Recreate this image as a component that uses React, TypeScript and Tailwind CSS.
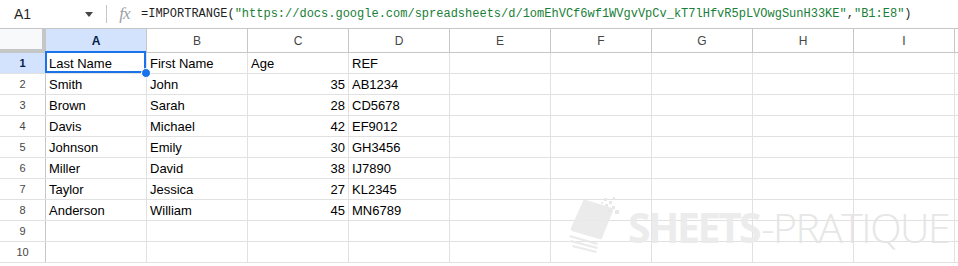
import React from "react";

const cols = ["A", "B", "C", "D", "E", "F", "G", "H", "I"];

type Row = [string, string, string, string];
const data: Row[] = [
  ["Last Name", "First Name", "Age", "REF"],
  ["Smith", "John", "35", "AB1234"],
  ["Brown", "Sarah", "28", "CD5678"],
  ["Davis", "Michael", "42", "EF9012"],
  ["Johnson", "Emily", "30", "GH3456"],
  ["Miller", "David", "38", "IJ7890"],
  ["Taylor", "Jessica", "27", "KL2345"],
  ["Anderson", "William", "45", "MN6789"],
  ["", "", "", ""],
  ["", "", "", ""],
];

function Logo() {
  return (
    <svg width="62" height="58" viewBox="0 0 62 58" className="block shrink-0">
      <g fill="#e9e9e9">
        <path d="M18 4 L44 12 Q46 13 45 15 L34 42 Q33 44 31 43 L4 35 Q2 34 3 32 L15 5 Q16 3 18 4 Z" />
        <path d="M2 39 L30 47 L29 49 L1 41 Z" />
        <path d="M3 44 L30 51 L29 53 L2 46 Z" />
        <path d="M5 49 L29 55 L28 57 L4 51 Z" />
      </g>
      <g fill="#e6e6e6">
        <rect x="36" y="2" width="3" height="3" />
        <rect x="41" y="5" width="3" height="3" />
        <rect x="37" y="8" width="3" height="3" />
        <rect x="44" y="10" width="3" height="3" />
        <rect x="40" y="13" width="3" height="3" />
        <rect x="47" y="14" width="4" height="4" />
        <rect x="33" y="6" width="2" height="2" />
        <rect x="45" y="1" width="2" height="2" />
      </g>
    </svg>
  );
}

export default function App() {
  return (
    <div className="relative w-[958px] h-[266px] overflow-hidden bg-white font-['Liberation_Sans',Arial,sans-serif] text-black">
      {/* formula bar */}
      <div className="flex h-[28px] items-center">
        <div className="w-[106px] flex items-center pl-[14px] pr-[13px]">
          <span className="text-[14px] text-[#1f1f1f] flex-1">A1</span>
          <svg width="8" height="5" viewBox="0 0 8 5">
            <path d="M0 0 L8 0 L4 5 Z" fill="#444746" />
          </svg>
        </div>
        <div className="w-px h-[18px] bg-[#c4c7c5]" />
        <div className="w-[34px] flex items-center justify-center pl-[1px]">
          <span className="font-['Liberation_Serif',serif] italic text-[17px] text-[#9aa0a6] tracking-[-1px]">fx</span>
        </div>
        <div className="font-['Liberation_Mono',monospace] text-[12px] text-[#1f1f1f] whitespace-nowrap">
          =IMPORTRANGE(
          <span className="text-[#188038]">"https://docs.google.com/spreadsheets/d/1omEhVCf6wf1WVgvVpCv_kT7lHfvR5pLVOwgSunH33KE"</span>
          ,<span className="text-[#188038]">"B1:E8"</span>)
        </div>
      </div>

      {/* column header row */}
      <div className="flex h-[25px] border-t border-b border-[#c4c7c5]">
        <div className="w-[46px] shrink-0 bg-[#f8f9fa] border-r-[4px] border-b-[4px] border-[#c4c7c5] -mb-px" />
        {cols.map((c, i) => (
          <div
            key={c}
            className={`w-[101px] shrink-0 flex items-center justify-center border-r border-[#c4c7c5] text-[12px] ${
              i === 0 ? "bg-[#d3e3fd] text-[#041e49] font-semibold" : "text-[#444746]"
            }`}
          >
            {c}
          </div>
        ))}
        <div className="flex-1" />
      </div>

      {/* body rows */}
      {data.map((row, r) => (
        <div key={r} className="flex h-[21px] border-b border-[#e1e1e1]">
          <div
            className={`w-[46px] shrink-0 flex items-center justify-center border-r border-[#c4c7c5] text-[11px] ${
              r === 0 ? "bg-[#d3e3fd] text-[#041e49] font-bold" : "text-[#444746]"
            }`}
          >
            {r + 1}
          </div>
          {cols.map((c, i) => {
            const v = i < 4 ? row[i] : "";
            const isNum = i === 2 && /^\d+$/.test(v);
            const sel = r === 0 && i === 0;
            return (
              <div
                key={c}
                className={`relative w-[101px] shrink-0 flex items-center border-r border-[#e1e1e1] text-[13px] px-[3px] whitespace-nowrap ${
                  isNum ? "justify-end" : "justify-start"
                }`}
              >
                <span className="translate-y-[1px]">{v}</span>
                {sel && (
                  <>
                    <div className="absolute left-[-1px] top-[-2px] w-[101px] h-[22px] border-2 border-[#1a73e8] pointer-events-none" />
                    <div className="absolute right-[-5px] bottom-[-5px] w-[10px] h-[10px] rounded-full bg-[#1a73e8] border border-white z-10" />
                  </>
                )}
              </div>
            );
          })}
          <div className="flex-1" />
        </div>
      ))}

      {/* watermark */}
      <div className="absolute left-[568px] top-[196px] flex items-center pointer-events-none opacity-90">
        <Logo />
        <div className="flex items-baseline leading-none whitespace-nowrap -ml-[2px] mt-[4px]">
          <span className="font-['Open_Sans',sans-serif] font-bold text-[41px] leading-none text-[#ebebeb] tracking-[-2.5px]">
            SHEETS
          </span>
          <span className="ml-[2px] font-['Open_Sans',sans-serif] font-light text-[41px] leading-none text-[#e4e4e4] tracking-[-1.5px]">
            -PRATIQUE
          </span>
        </div>
      </div>
    </div>
  );
}
